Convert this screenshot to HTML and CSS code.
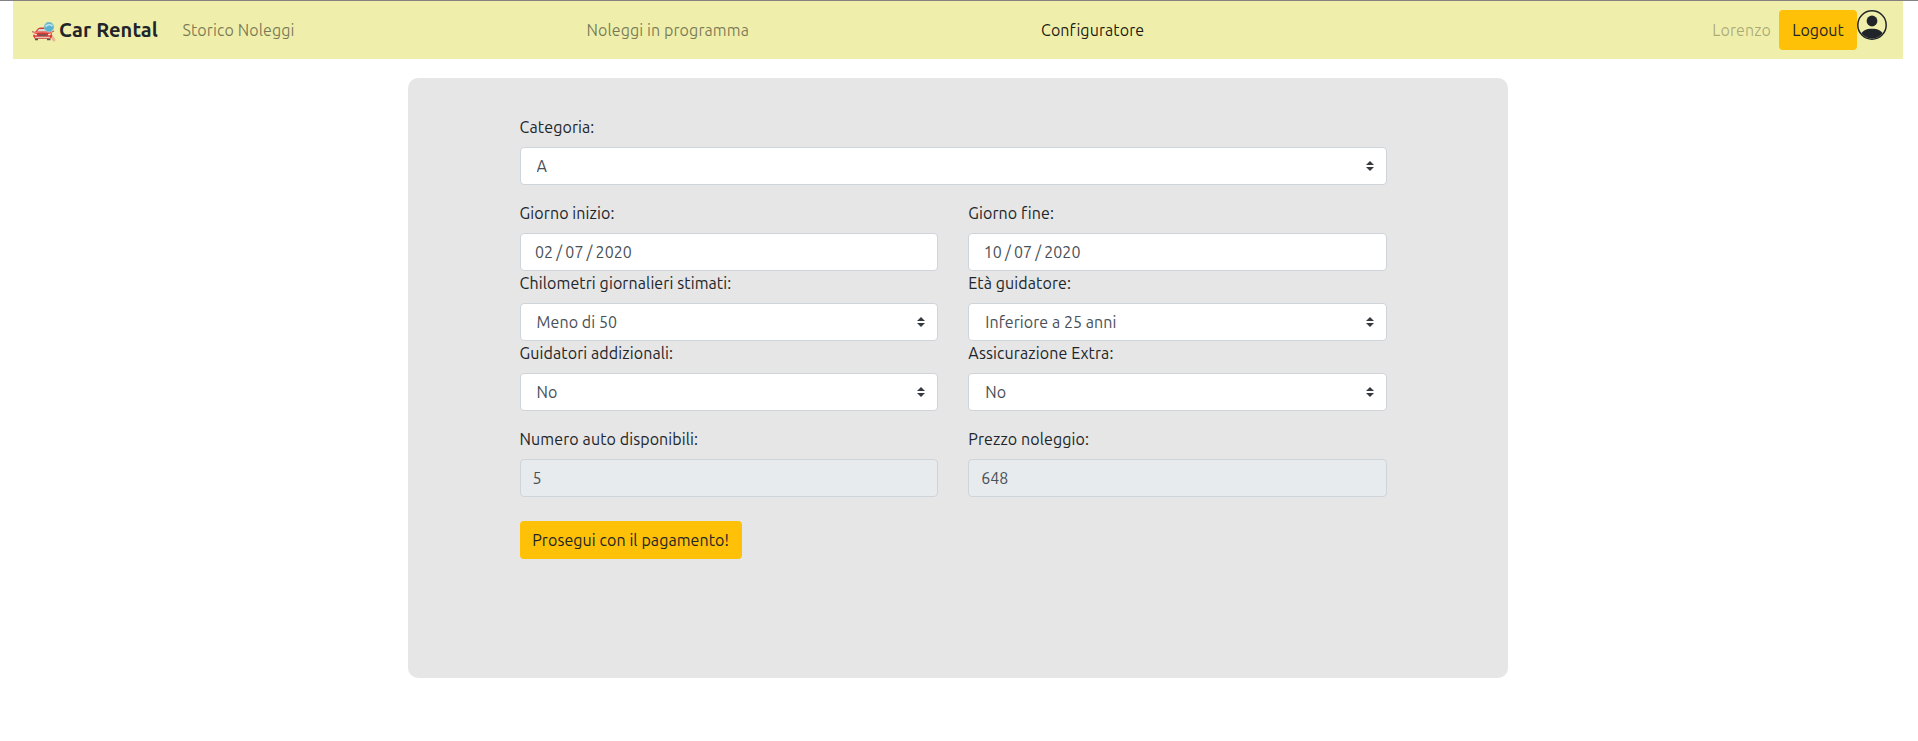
FILE: index.html
```html
<!DOCTYPE html>
<html lang="it">
<head>
<meta charset="utf-8">
<title>Car Rental</title>
<link rel="stylesheet" href="styles.css">
</head>
<body>
<nav class="navbar">
  <a class="brand">
    <svg class="brand-logo" viewBox="0 0 24 20" width="24" height="20">
      <path d="M17.500 11l4.500 7" stroke="#e9b48f" stroke-width="3" stroke-linecap="round"/>
      <path d="M3 10L6 6.500Q7 5.500 9 5.500H15Q17 5.500 18 7L19.500 10 20 15 18 17H3L1 14Z" fill="#d63a35"/>
      <path d="M0 9.500l3 1M20 10l2-1" stroke="#b5695f" stroke-width="1.200"/>
      <path d="M5 9.500L7 7H15L17 9.500Z" fill="#d5dcd8"/>
      <path d="M2 10.800Q10 9 19 10.800" stroke="#f27b70" stroke-width="1.300" fill="none"/>
      <path d="M6 12.300H15L14 14H7Z" fill="#705656"/>
      <path d="M2 11.500l3 .5-.5 1.500-2-.5zM16 12l3-.5-.5 1.600-2 .4z" fill="#fff3dc"/>
      <path d="M3 15.500H18" stroke="#e2c4b7" stroke-width="1.600"/>
      <path d="M3 17.500H6M15 17.500H18.500" stroke="#55504c" stroke-width="1.600"/>
      <circle cx="17" cy="5" r="4.700" fill="#58b2d0" stroke="#8fbfc9"/>
      <path d="M13.500 4.500Q17 1 20.500 4" stroke="#b6e3ec" stroke-width="1.800" fill="none"/>
    </svg>
    <span class="brand-name">Car Rental</span>
  </a>
  <div class="nav-links">
    <a class="nav-link">Storico Noleggi</a>
    <a class="nav-link">Noleggi in programma</a>
    <a class="nav-link active">Configuratore</a>
  </div>
  <div class="account">
    <span class="user-name">Lorenzo</span>
    <button class="btn logout">Logout</button>
    <svg class="avatar" viewBox="0 0 30 30" width="30" height="30">
      <defs><clipPath id="disc"><circle cx="15" cy="15" r="13.400"/></clipPath></defs>
      <circle cx="15" cy="15" r="14.200" fill="none" stroke="#212529" stroke-width="1.500"/>
      <circle cx="15" cy="11" r="5.400" fill="#212529"/>
      <path d="M3 26C5 20.500 9.500 18.800 15 18.800S25 20.500 27 26V30H3Z" fill="#212529" clip-path="url(#disc)"/>
    </svg>
  </div>
</nav>
<main class="card">
  <form class="form">
    <div class="field wide">
      <label for="cat">Categoria:</label>
      <select class="control select" id="cat"><option>A</option></select>
    </div>
    <div class="field">
      <label for="start">Giorno inizio:</label>
      <input class="control date" id="start" type="text" value="02 / 07 / 2020">
    </div>
    <div class="field">
      <label for="end">Giorno fine:</label>
      <input class="control date" id="end" type="text" value="10 / 07 / 2020">
    </div>
    <div class="field">
      <label for="km">Chilometri giornalieri stimati:</label>
      <select class="control select" id="km"><option>Meno di 50</option></select>
    </div>
    <div class="field">
      <label for="age">Età guidatore:</label>
      <select class="control select" id="age"><option>Inferiore a 25 anni</option></select>
    </div>
    <div class="field spaced">
      <label for="drivers">Guidatori addizionali:</label>
      <select class="control select" id="drivers"><option>No</option></select>
    </div>
    <div class="field spaced">
      <label for="ins">Assicurazione Extra:</label>
      <select class="control select" id="ins"><option>No</option></select>
    </div>
    <div class="field">
      <label for="count">Numero auto disponibili:</label>
      <input class="control" id="count" type="text" value="5" readonly>
    </div>
    <div class="field">
      <label for="price">Prezzo noleggio:</label>
      <input class="control" id="price" type="text" value="648" readonly>
    </div>
    <button class="btn pay" type="button">Prosegui con il pagamento!</button>
  </form>
</main>
</body>
</html>
```
FILE: styles.css
```css
* { box-sizing: border-box; }
body {
  margin: 0;
  border-top: 1px solid #858282;
  background: #fff;
  color: #212529;
  font: 16px/24px Ubuntu, "Noto Sans", sans-serif;
  letter-spacing: .1px;
  font-variant-ligatures: common-ligatures;
}
.navbar {
  display: flex;
  align-items: center;
  height: 58px;
  margin: 0 15px 0 13px;
  padding: 0 16px 0 19px;
  background: #efefab;
}
.brand { display: flex; align-items: center; width: 150.5px; }
.brand-logo { margin-top: 4px; }
.brand-name { margin-left: 3px; font-size: 20px; font-weight: 700; white-space: nowrap; }
.nav-links { display: flex; gap: 292px; flex: 1; }
.nav-link { color: rgba(0, 0, 0, .5); white-space: nowrap; }
.active { color: rgba(0, 0, 0, .9); }
.account { display: flex; align-items: center; }
.user-name { margin-right: 8px; color: rgba(0, 0, 0, .3); }
.avatar { align-self: flex-start; }
.btn {
  height: 38px;
  padding: 0;
  border: 0;
  border-radius: 4px;
  background: #ffc107;
  color: #212529;
  font: inherit;
}
.logout { width: 78px; height: 40px; padding-bottom: 1px; }
.pay { width: 222px; margin-top: 24px; letter-spacing: .08px; }
.card {
  width: 1100px;
  height: 600px;
  margin: 19px 0 0 408px;
  padding: 37px 121px 0 111.6px;
  border-radius: 10px;
  background: #e6e6e6;
}
.form { display: grid; grid-template-columns: 1fr 1fr; column-gap: 30px; }
.field { display: flex; flex-direction: column; }
.field label { height: 24px; margin-bottom: 8px; }
.wide { grid-column: 1 / -1; }
.wide, .spaced { margin-bottom: 16px; }
.control {
  width: 100%;
  height: 38px;
  padding: 6px 12px;
  border: 1px solid #ced4da;
  border-radius: 4px;
  background-color: #fff;
  color: #495057;
  font: inherit;
}
.control[readonly] { background-color: #e7ebee; }
.date { padding-left: 14.5px; word-spacing: -.5px; }
.select {
  appearance: none;
  padding: 0 28px 0 16px;
  background: #fff url("data:image/svg+xml,%3csvg xmlns='http://www.w3.org/2000/svg' width='4' height='5' viewBox='0 0 4 5'%3e%3cpath fill='%23343a40' d='M2 0L0 2h4zm0 5L0 3h4z'/%3e%3c/svg%3e") no-repeat right 12px center / 8px 10px;
  letter-spacing: .06px;
}
```
